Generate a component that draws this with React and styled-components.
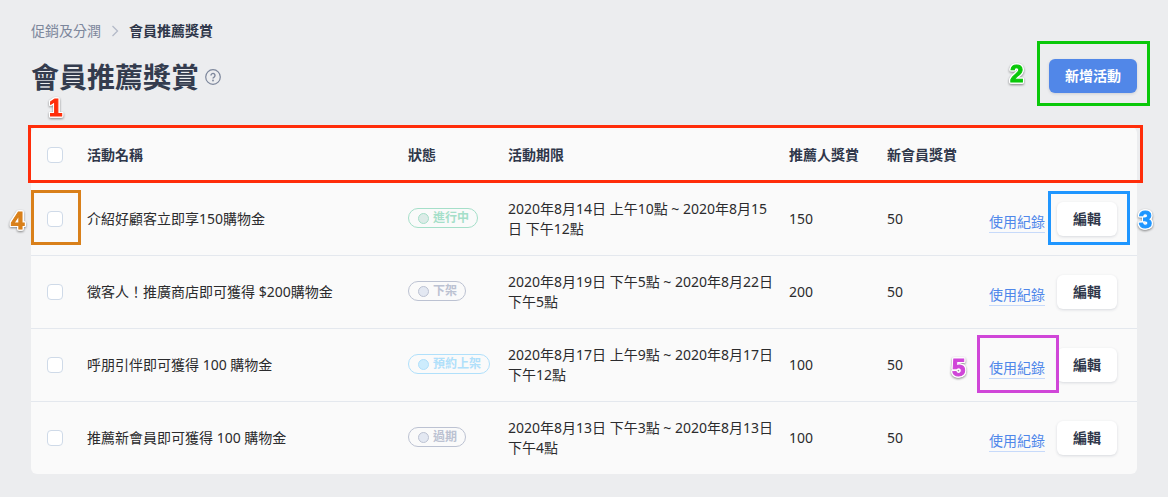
import React from "react";
import styled, { createGlobalStyle } from "styled-components";

const GlobalStyle = createGlobalStyle`
  *, *::before, *::after { box-sizing: border-box; }
  body {
    margin: 0;
    background: #ecedef;
    color: #2b2b2d;
    font-family: "Noto Sans", "Noto Sans CJK TC", sans-serif;
    font-size: 14px;
    line-height: 20px;
  }
`;

const Page = styled.main`
  min-height: 100vh;
  padding: 21px 31px 23px;
`;

const Breadcrumb = styled.nav`
  display: flex;
  align-items: center;
  gap: 10px;
  height: 20px;
  color: #2f374a;
`;

const CrumbLink = styled.a`
  color: #7d879c;
  text-decoration: none;
`;

const CurrentCrumb = styled.span`
  font-weight: 700;
`;

const Header = styled.header`
  display: flex;
  align-items: flex-start;
  justify-content: space-between;
  margin: 18px 0 32px;
`;

const TitleGroup = styled.div`
  display: flex;
  align-items: center;
  gap: 6px;
`;

const Title = styled.h1`
  margin: 0;
  color: #343c4e;
  font-size: 28px;
  font-weight: 700;
  line-height: 36px;
`;

const HelpButton = styled.button`
  display: flex;
  padding: 0;
  border: 0;
  background: none;
  color: #7d879c;
  cursor: pointer;
`;

const Button = styled.button`
  height: 34px;
  padding: 0 16px;
  border: 0;
  border-radius: 6px;
  background: ${(p) => (p.$primary ? "#5187e8" : "#ffffff")};
  color: ${(p) => (p.$primary ? "#ffffff" : "#2f374a")};
  box-shadow: 0 1px 3px rgba(40, 50, 80, 0.16);
  font: inherit;
  font-weight: 700;
  white-space: nowrap;
  cursor: pointer;
`;

const Table = styled.table`
  width: 100%;
  table-layout: fixed;
  border-collapse: separate;
  border-spacing: 0;
  border-radius: 6px;
  background: #fafafa;
`;

const Column = styled.col`
  width: ${(p) => p.$width};
`;

const HeadRow = styled.tr`
  position: relative;
  height: 56px;
`;

const Row = styled.tr`
  height: 73px;

  &:last-child { height: 72px; }
  &:not(:last-child) td { border-bottom: 1px solid #e4e8ee; }
`;

const HeadCell = styled.th`
  padding: 0;
  color: #2f374a;
  font-weight: 600;
  text-align: left;
`;

const Cell = styled.td`
  padding: 0;
`;

const PeriodCell = styled(Cell)`
  padding-right: 12px;
`;

const CheckWrap = styled.div`
  position: relative;
  width: 16px;
  height: 16px;
  margin-left: 16px;
`;

const Checkbox = styled.input`
  display: block;
  width: 16px;
  height: 16px;
  margin: 0;
  appearance: none;
  border: 1px solid #cfdae8;
  border-radius: 4px;
  background: #ffffff;

  &:checked { background: #5187e8; }
`;

const tones = {
  active: { line: "#a5dfc9", dot: "#dcebe7" },
  muted: { line: "#bcc2d2", dot: "#e3e8f2" },
  scheduled: { line: "#b0e0fb", dot: "#cdecfd" },
};

const StatusSlot = styled.div`
  display: flex;
  padding-bottom: 2px;
`;

const Status = styled.span`
  display: inline-flex;
  align-items: center;
  gap: 4px;
  height: 20px;
  padding: 0 8px 0 9px;
  border: 1px solid ${(p) => tones[p.$tone].line};
  border-radius: 10px;
  color: ${(p) => tones[p.$tone].line};
  font-size: 12px;
  font-weight: 600;
  line-height: 18px;

  &::before {
    content: "";
    width: 11px;
    height: 11px;
    border: 1px solid ${(p) => tones[p.$tone].line};
    border-radius: 50%;
    background: ${(p) => tones[p.$tone].dot};
  }
`;

const Actions = styled.div`
  display: flex;
  align-items: center;
  justify-content: flex-end;
  gap: 12px;
  padding-right: 20px;
`;

const RecordLink = styled.a`
  display: block;
  padding-top: 6px;
  border-bottom: 1px solid #c7dafa;
  color: #4f87ea;
  text-decoration: none;
  white-space: nowrap;
`;

const Target = styled.div`
  position: relative;
`;

const MarkFrame = styled.div`
  position: absolute;
  inset: ${(p) => p.$inset};
  border: 3px solid ${(p) => p.$color};
  color: ${(p) => p.$color};
  pointer-events: none;
  z-index: 1;
`;

const MarkNumber = styled.span`
  position: absolute;
  top: ${(p) => p.$top};
  left: ${(p) => p.$left};
  right: ${(p) => p.$right};
  font-family: "Liberation Sans", sans-serif;
  font-size: 24px;
  font-weight: 700;
  line-height: 24px;
  -webkit-text-stroke: 1px currentColor;
  filter:
    drop-shadow(1px 0 0 #ffffff) drop-shadow(-1px 0 0 #ffffff)
    drop-shadow(0 1px 0 #ffffff) drop-shadow(0 -1px 0 #ffffff)
    drop-shadow(0 1px 1px rgba(0, 0, 0, 0.45));
`;

function Mark({ number, color, inset, top, left, right }) {
  return (
    <MarkFrame $color={color} $inset={inset}>
      <MarkNumber $top={top} $left={left} $right={right}>{number}</MarkNumber>
    </MarkFrame>
  );
}

const campaigns = [
  { name: "介紹好顧客立即享150購物金", status: "進行中", tone: "active", period: "2020年8月14日 上午10點 ~ 2020年8月15日 下午12點", referrer: 150, member: 50, markCheck: true, markEdit: true },
  { name: "徵客人！推廣商店即可獲得 $200購物金", status: "下架", tone: "muted", period: "2020年8月19日 下午5點 ~ 2020年8月22日 下午5點", referrer: 200, member: 50 },
  { name: "呼朋引伴即可獲得 100 購物金", status: "預約上架", tone: "scheduled", period: "2020年8月17日 上午9點 ~ 2020年8月17日 下午12點", referrer: 100, member: 50, markRecord: true },
  { name: "推薦新會員即可獲得 100 購物金", status: "過期", tone: "muted", period: "2020年8月13日 下午3點 ~ 2020年8月13日 下午4點", referrer: 100, member: 50 },
];

function CampaignRow({ item }) {
  return (
    <Row>
      <Cell>
        <CheckWrap>
          <Checkbox type="checkbox" aria-label={item.name} />
          {item.markCheck && <Mark number="4" color="#d9801a" inset="-21px -18px -18px -16px" top="16px" left="-23px" />}
        </CheckWrap>
      </Cell>
      <Cell>{item.name}</Cell>
      <Cell>
        <StatusSlot>
          <Status $tone={item.tone}>{item.status}</Status>
        </StatusSlot>
      </Cell>
      <PeriodCell>{item.period}</PeriodCell>
      <Cell>{item.referrer}</Cell>
      <Cell>{item.member}</Cell>
      <Cell>
        <Actions>
          <Target>
            <RecordLink href="#records">使用紀錄</RecordLink>
            {item.markRecord && <Mark number="5" color="#d046d8" inset="-17px -14px -14px -12px" top="18px" left="-28px" />}
          </Target>
          <Target>
            <Button type="button">編輯</Button>
            {item.markEdit && <Mark number="3" color="#1f96ff" inset="-11px -13px -9px -9px" top="14px" right="-25px" />}
          </Target>
        </Actions>
      </Cell>
    </Row>
  );
}

export default function App() {
  return (
    <>
      <GlobalStyle />
      <Page>
        <Breadcrumb>
          <CrumbLink href="#promotions">促銷及分潤</CrumbLink>
          <svg width="8" height="12" viewBox="0 0 8 12" fill="none" stroke="#b4bac8" strokeWidth="1.3" aria-hidden="true">
            <path d="M1.5 1 6.5 6l-5 5" />
          </svg>
          <CurrentCrumb>會員推薦獎賞</CurrentCrumb>
        </Breadcrumb>
        <Header>
          <TitleGroup>
            <Title>會員推薦獎賞</Title>
            <HelpButton type="button" aria-label="說明">
              <svg width="16" height="16" viewBox="0 0 16 16" fill="none" stroke="currentColor" strokeWidth="1.2">
                <circle cx="8" cy="8" r="7.3" />
                <path d="M6 6.500a2 2 0 1 1 3.100 1.600C8.300 8.600 8 8.900 8 9.600" strokeWidth="1.4" />
                <circle cx="8" cy="11.500" r=".9" fill="currentColor" stroke="none" />
              </svg>
            </HelpButton>
          </TitleGroup>
          <Target>
            <Button type="button" $primary>新增活動</Button>
            <Mark number="2" color="#0ac80a" inset="-18px -13px -13px -12px" top="18px" left="-30px" />
          </Target>
        </Header>
        <Table>
          <colgroup>
            <Column $width="56px" />
            <Column $width="auto" />
            <Column $width="100px" />
            <Column $width="281px" />
            <Column $width="98px" />
            <Column $width="98px" />
            <Column $width="152px" />
          </colgroup>
          <thead>
            <HeadRow>
              <HeadCell>
                <Mark number="1" color="#ff2d0a" inset="-2px -6px 0 -3px" top="-32px" left="18px" />
                <CheckWrap>
                  <Checkbox type="checkbox" aria-label="全選" />
                </CheckWrap>
              </HeadCell>
              <HeadCell>活動名稱</HeadCell>
              <HeadCell>狀態</HeadCell>
              <HeadCell>活動期限</HeadCell>
              <HeadCell>推薦人獎賞</HeadCell>
              <HeadCell>新會員獎賞</HeadCell>
              <HeadCell aria-label="操作" />
            </HeadRow>
          </thead>
          <tbody>
            {campaigns.map((item) => <CampaignRow key={item.name} item={item} />)}
          </tbody>
        </Table>
      </Page>
    </>
  );
}
